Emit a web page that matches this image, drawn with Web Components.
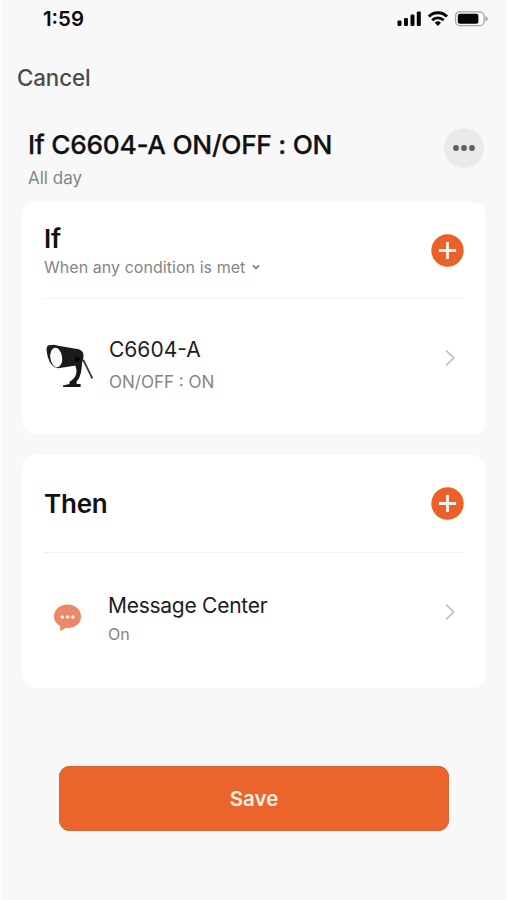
<!DOCTYPE html>
<html lang="en">
<head>
<meta charset="utf-8">
<title>Automation</title>
<style>
html,body{margin:0;height:100%;background:#f8f8f8;font-family:Inter,"Liberation Sans",sans-serif}
</style>
</head>
<body>
<scene-page></scene-page>
<script>
const define=(name,html)=>{
  const t=document.createElement('template');
  t.innerHTML=html;
  customElements.define(name,class extends HTMLElement{
    constructor(){super();this.attachShadow({mode:'open'}).append(t.content.cloneNode(true));}
  });
};

define('status-bar',`<style>
:host{display:flex;justify-content:space-between;align-items:center;height:37px;padding:0 19px 0 43px;box-sizing:border-box}
b{font-weight:600;font-size:20.4px;line-height:24px;color:#0b0b0b}
svg{display:block}
</style><b>1:59</b>
<svg width="92" height="22" viewBox="396 7.6 92 22">
<g fill="#050505"><rect x="397.5" y="20" width="4" height="5.6" rx="1.2"/><rect x="404" y="17.6" width="4" height="8" rx="1.2"/><rect x="410.5" y="14.2" width="4" height="11.4" rx="1.2"/><rect x="416.8" y="11" width="4" height="14.6" rx="1.2"/></g>
<g fill="none" stroke="#050505" stroke-width="2.9"><path d="M428.8 16.2a12.8 12.8 0 0 1 18.2 0"/><path d="M432.2 19.9a8 8 0 0 1 11.4 0"/></g>
<path d="M434.8 22.4a4.5 4.5 0 0 1 6.2 0L437.9 25.6z" fill="#050505"/>
<rect x="455.6" y="11.4" width="28.4" height="13.8" rx="4.2" fill="#fbfbfb" stroke="#a5a5a5" stroke-width="1.3"/>
<rect x="457.8" y="13.3" width="20.6" height="10" rx="2" fill="#050505"/>
<path d="M485.4 15.7q2.4.7 2.4 2.7t-2.4 2.7z" fill="#a5a5a5"/>
</svg>`);

define('nav-bar',`<style>
:host{display:flex;align-items:center;height:80px;padding-left:17px;box-sizing:border-box;font-weight:500;font-size:22.3px;color:#4b4b4b;letter-spacing:-.1px}
</style><slot></slot>`);

define('more-button',`<style>
:host{display:block;width:40px;height:40px;border-radius:50%;background:#eaeaea}
svg{display:block}
</style><svg width="40" height="40"><g fill="#606060"><circle cx="12" cy="20" r="2.9"/><circle cx="20" cy="20" r="2.9"/><circle cx="28" cy="20" r="2.9"/></g></svg>`);

define('add-button',`<style>
:host{display:block;width:33px;height:33px;flex:none}
svg{display:block}
</style><svg width="33" height="33"><circle cx="16.5" cy="16.5" r="16.2" fill="#ea622a"/><path d="M16.5 7.9v17.2M7.9 16.5h17.2" stroke="#fff6ef" stroke-width="2.8"/></svg>`);

define('scene-title',`<style>
:host{display:flex;justify-content:space-between;align-items:flex-start;height:85px;padding:11px 23px 0 28px;box-sizing:border-box}
h1{margin:0;font-weight:500;font-size:26.3px;line-height:33px;color:#111;letter-spacing:-.3px;white-space:nowrap;-webkit-text-stroke:.25px}
p{margin:7px 0 0;font-size:17px;line-height:20px;color:#858585}
</style><div><h1><slot name="title"></slot></h1><p><slot name="sub"></slot></p></div><more-button></more-button>`);

define('rule-card',`<style>
:host{display:block;margin-left:22px;width:464px;background:#fff;border-radius:14px;box-sizing:border-box;padding:0 22px}
header{display:flex;align-items:center;justify-content:space-between;height:var(--head,96px);border-bottom:1.5px solid #f2f2f2}
h2{margin:0;padding-top:var(--h2-top,0);font-weight:600;font-size:26px;line-height:32px;color:#111;letter-spacing:-.2px}
</style><header><div><h2><slot name="heading"></slot></h2><slot name="note"></slot></div><add-button></add-button></header><slot></slot>`);

define('match-mode',`<style>
:host{display:flex;align-items:center;gap:6px;font-size:16px;line-height:20px;color:#858585;margin-top:2px;letter-spacing:.05px}
</style><slot></slot><svg width="10" height="8"><path d="M2 2.4l3 3 3-3" fill="none" stroke="#777" stroke-width="1.5"/></svg>`);

define('rule-row',`<style>
:host{display:flex;align-items:center;height:135px}
.icon{width:var(--icon-w,65px);flex:none;padding-bottom:var(--icon-up,1px)}
.text{flex:1;padding-bottom:5px}
.name{font-size:21px;line-height:26px;color:#1d1d1d;letter-spacing:var(--ls-name,0)}
.state{margin-top:var(--gap,9px);font-size:var(--state,17px);line-height:20px;color:#858585}
.go{margin:-18px 7px 0 0}
</style><div class="icon"><slot name="icon"></slot></div>
<div class="text"><div class="name"><slot name="name"></slot></div><div class="state"><slot name="state"></slot></div></div>
<svg class="go" width="14" height="20"><path d="M3 2.3L10.7 10 3 17.7" fill="none" stroke="#c6c6c6" stroke-width="1.9"/></svg>`);

define('spot-light',`<style>:host,svg{display:block}</style>
<svg width="52" height="48" viewBox="44 342 52 48">
<path d="M83.3 360L92.4 378.5" stroke="#3a3a3a" stroke-width="1.7" fill="none"/>
<path d="M74 363L82 358.5Q82.2 367 81 372.5Q79.8 378 76.6 381.6V384H80.6V387H63V385.4L69.5 384V381.8Q74.5 379 76 374.5Q77.4 370 75 365Z" fill="#181818"/>
<path d="M52 345Q54 344.6 57 345.4L78.5 349.2Q83.5 350.6 83.5 355.5Q83.5 361.5 80.8 364.8L58 368.2Q51 367.5 47.8 357Q45 346.5 48.5 345.3Z" fill="#1b1b1b"/>
<ellipse cx="56.2" cy="357.5" rx="5.9" ry="9.8" transform="rotate(-8 56.2 357.5)" fill="#fcfcfc"/>
<path d="M75 356.5l5 1.5-1.5 4-4-1z" fill="#050505"/>
</svg>`);

define('message-bubble',`<style>:host{display:block;margin-left:9px}svg{display:block}</style>
<svg width="30" height="30" viewBox="53 602 30 30">
<path d="M67.5 603.6C75.5 603.6 81 609 81 615.5C81 622.3 75 627 67.8 627L65.5 626.8Q63.2 629 60.2 630V624.7C56 623 54 619.6 54 615.5C54 609 59.7 603.6 67.5 603.6Z" fill="#e98967"/>
<g fill="#fff1e9"><circle cx="62.3" cy="616" r="1.8"/><circle cx="67.6" cy="616" r="1.8"/><circle cx="72.9" cy="616" r="1.8"/></g></svg>`);

define('save-button',`<style>
:host{display:flex;align-items:center;justify-content:center;width:390px;height:65px;margin:78px 0 0 59px;border-radius:11px;background:#eb642c;box-shadow:inset 0 0 0 1px #dd6534;color:#fff0e5;font-weight:600;font-size:20.5px}
</style><slot></slot>`);

define('scene-page',`<style>
:host{display:block;width:507px;height:900px;box-sizing:border-box;background:linear-gradient(90deg,#fdfdfd 2px,#f8f8f8 2px 505px,#fdfdfd 505px);overflow:hidden}
.then{margin-top:21px;--h2-top:1px;--head:97px}
.first{--ls-name:0px}
.second{--icon-w:64px;--gap:5px;--state:16px;--ls-name:-.26px;--icon-up:6px}
</style>
<status-bar></status-bar>
<nav-bar>Cancel</nav-bar>
<scene-title><span slot="title">If C6604-A ON/OFF : ON</span><span slot="sub">All day</span></scene-title>
<rule-card><span slot="heading">If</span><match-mode slot="note">When any condition is met</match-mode>
<rule-row class="first"><spot-light slot="icon"></spot-light><span slot="name">C6604-A</span><span slot="state">ON/OFF : ON</span></rule-row></rule-card>
<rule-card class="then"><span slot="heading">Then</span>
<rule-row class="second"><message-bubble slot="icon"></message-bubble><span slot="name">Message Center</span><span slot="state">On</span></rule-row></rule-card>
<save-button>Save</save-button>`);
</script>
</body>
</html>
